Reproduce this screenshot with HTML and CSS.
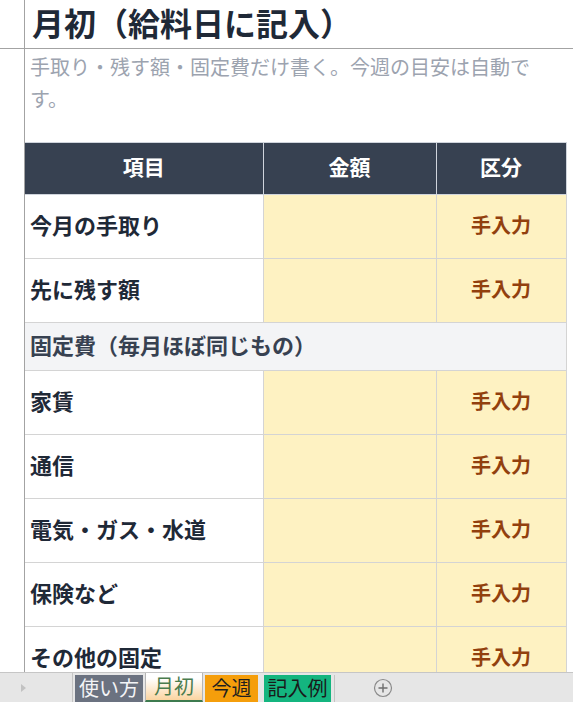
FILE: index.html
```html
<!DOCTYPE html>
<html lang="ja">
<head>
<meta charset="UTF-8">
<meta name="viewport" content="width=device-width, initial-scale=1.0">
<title>月初</title>
<link rel="stylesheet" href="styles.css">
</head>
<body>

<div class="sheet">
  <div class="frozen-row">
    <div class="gutter"></div>
    <h1 class="title">月初（給料日に記入）</h1>
  </div>

  <div class="scroll-area">
    <div class="gutter"></div>
    <div class="cells">
      <p class="note">手取り・残す額・固定費だけ書く。今週の目安は自動です。</p>

      <table class="budget">
        <colgroup>
          <col class="col-item">
          <col class="col-amount">
          <col class="col-kind">
        </colgroup>
        <tr class="head">
          <th>項目</th>
          <th>金額</th>
          <th>区分</th>
        </tr>
        <tr class="row">
          <td class="label">今月の手取り</td>
          <td class="amount"></td>
          <td class="kind">手入力</td>
        </tr>
        <tr class="row">
          <td class="label">先に残す額</td>
          <td class="amount"></td>
          <td class="kind">手入力</td>
        </tr>
        <tr class="section">
          <td colspan="3">固定費（毎月ほぼ同じもの）</td>
        </tr>
        <tr class="row">
          <td class="label">家賃</td>
          <td class="amount"></td>
          <td class="kind">手入力</td>
        </tr>
        <tr class="row">
          <td class="label">通信</td>
          <td class="amount"></td>
          <td class="kind">手入力</td>
        </tr>
        <tr class="row">
          <td class="label">電気・ガス・水道</td>
          <td class="amount"></td>
          <td class="kind">手入力</td>
        </tr>
        <tr class="row">
          <td class="label">保険など</td>
          <td class="amount"></td>
          <td class="kind">手入力</td>
        </tr>
        <tr class="row">
          <td class="label">その他の固定</td>
          <td class="amount"></td>
          <td class="kind">手入力</td>
        </tr>
      </table>
    </div>
  </div>
</div>

<div class="tabs">
  <div class="tab-nav"><span class="arrow"></span></div>
  <div class="tab tab-guide">使い方</div>
  <div class="tab tab-month">月初</div>
  <div class="tab tab-week">今週</div>
  <div class="tab tab-example">記入例</div>
  <div class="tab-add">
    <svg width="20" height="20" viewBox="0 0 20 20">
      <circle cx="10" cy="10" r="8.5" fill="none" stroke="#8a8a8a" stroke-width="1.2"/>
      <path d="M10 5.5v9M5.5 10h9" stroke="#6e6e6e" stroke-width="1.4"/>
    </svg>
  </div>
</div>

</body>
</html>
```

FILE: styles.css
```css
body {
  margin: 0;
  width: 573px;
  height: 702px;
  overflow: hidden;
  font-family: "Noto Sans CJK JP", "Noto Sans", sans-serif;
  background-color: #ffffff;
  color: #1f2937;
}

.sheet {
  height: 672px;
  overflow: hidden;
  display: flex;
  flex-direction: column;
}

.gutter {
  width: 24px;
  flex: 0 0 24px;
  border-right: 1px solid #a3a3a3;
}

.frozen-row {
  display: flex;
  height: 48px;
  flex: 0 0 48px;
  border-bottom: 1px solid #a3a3a3;
}

.title {
  margin: 0;
  padding-left: 7px;
  font-size: 32px;
  font-weight: bold;
  line-height: 45px;
  color: #1f2937;
  white-space: nowrap;
}

.scroll-area {
  display: flex;
  flex: 1;
}

.cells {
  flex: 1;
}

.note {
  margin: 0;
  box-sizing: border-box;
  width: 512px;
  height: 93px;
  padding: 2px 0 0 5px;
  font-size: 20px;
  line-height: 32px;
  color: #9ca3af;
}

.budget {
  border-collapse: collapse;
  table-layout: fixed;
  width: 541px;
}

.col-item { width: 238px; }
.col-amount { width: 173px; }
.col-kind { width: 130px; }

.budget th,
.budget td {
  border: 1px solid #d4d4d4;
  padding: 0 0 5px 0;
}

.budget th:first-child,
.budget td:first-child {
  border-left: none;
}

.budget tr.head {
  height: 52px;
}

.head th {
  background-color: #374151;
  color: #ffffff;
  font-size: 21px;
  font-weight: bold;
  text-align: center;
  border-color: #cfd4dc;
}

.budget tr.row {
  height: 64px;
}

.budget td.label {
  padding-left: 5px;
  font-size: 22px;
  font-weight: bold;
  color: #1f2937;
  white-space: nowrap;
}

.amount,
.kind {
  background-color: #fef2c2;
}

.kind {
  text-align: center;
  font-size: 20px;
  font-weight: bold;
  color: #92400e;
}

.budget tr.section {
  height: 48px;
}

.budget .section td {
  background-color: #f3f4f6;
  padding-left: 5px;
  font-size: 22px;
  font-weight: bold;
  color: #374151;
  white-space: nowrap;
}

.tabs {
  height: 29px;
  border-top: 1px solid #c6c6c6;
  background-color: #e6e6e6;
  display: flex;
  align-items: flex-end;
  font-size: 20px;
}

.tab-nav {
  width: 72px;
  height: 29px;
  border-right: 1px solid #c4c4c4;
  position: relative;
}

.arrow {
  position: absolute;
  left: 21px;
  top: 11px;
  width: 0;
  height: 0;
  border-top: 4px solid transparent;
  border-bottom: 4px solid transparent;
  border-left: 5px solid #c2c2c2;
}

.tab {
  height: 27px;
  line-height: 26px;
  text-align: center;
  box-sizing: border-box;
}

.tab-guide {
  margin-left: 2px;
  width: 68px;
  background-color: #6b7280;
  color: #f3f4f6;
}

.tab-month {
  margin-left: 2px;
  width: 58px;
  height: 29px;
  line-height: 26px;
  background: linear-gradient(#ffffff 20%, #fbd4a0);
  color: #4a7c4e;
  border-left: 1px solid #b5b5b5;
  border-right: 1px solid #b5b5b5;
  border-bottom: 2px solid #3e7b4f;
}

.tab-week {
  margin-left: 2px;
  width: 53px;
  background-color: #f59e0b;
  color: #1f1f1f;
}

.tab-example {
  margin-left: 6px;
  width: 71px;
  color: #1a1a1a;
  border-right: 1px solid #c4c4c4;
  padding-right: 3px;
  background: linear-gradient(to right, #14b57f 67px, transparent 67px);
}

.tab-add {
  margin-left: 38px;
  height: 29px;
  display: flex;
  align-items: center;
}

.tab-add svg {
  display: block;
}
```
